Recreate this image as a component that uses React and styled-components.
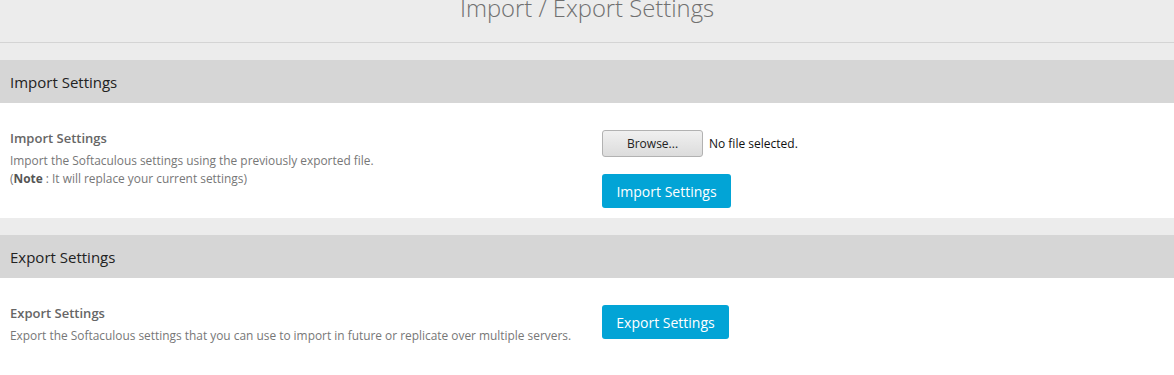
import React from "react";
import styled, { createGlobalStyle } from "styled-components";

const GlobalStyle = createGlobalStyle`
  html, body {
    margin: 0;
    padding: 0;
    background: #ececec;
    font-family: "Open Sans", "Liberation Sans", sans-serif;
  }
`;

const Page = styled.div`
  width: 1174px;
  height: 375px;
  overflow: hidden;
  background: #ececec;
`;

const TitleBar = styled.div`
  height: 42px;
  border-bottom: 1px solid #d4d4d4;
  overflow: hidden;
`;

const Title = styled.h1`
  margin: -4px 0 0;
  font-size: 23.8px;
  font-weight: 300;
  line-height: 24px;
  color: #707070;
  text-align: center;
`;

const Section = styled.section`
  margin-top: 17px;
`;

const SectionHead = styled.div`
  height: 43px;
  background: #d6d6d6;
  display: flex;
  align-items: center;
  padding: 0 10px;
  font-size: 15px;
  color: #222;
`;

const Body = styled.div`
  background: #fff;
  display: grid;
  grid-template-columns: 587px 1fr;
  padding: ${(p) => p.$pad};
`;

const Info = styled.div`
  padding: 0 10px;
`;

const Label = styled.div`
  font-size: 13px;
  font-weight: 600;
  color: #666;
  line-height: 18px;
`;

const Desc = styled.div`
  font-size: 11.9px;
  color: #777;
  line-height: 18px;
  margin-top: 4px;

  b {
    font-weight: 700;
    color: #555;
  }
`;

const Actions = styled.div`
  padding-left: 15px;
  margin-top: ${(p) => p.$top || 0}px;
  display: flex;
  flex-direction: column;
  align-items: flex-start;
  gap: 17px;
`;

const FileRow = styled.div`
  display: flex;
  align-items: center;
  gap: 6px;
  font-size: 12px;
  color: #111;
`;

const Browse = styled.button`
  width: 101px;
  height: 27px;
  border: 1px solid #b2b2b2;
  border-radius: 3px;
  background: linear-gradient(#f0f0f0, #dcdcdc);
  font-family: inherit;
  font-size: 12px;
  color: #222;
  padding: 0;
`;

const Blue = styled.button`
  width: ${(p) => p.$w}px;
  height: 34px;
  border: none;
  border-radius: 3px;
  background: #02a4d6;
  color: #fff;
  font-family: inherit;
  font-size: 14px;
  padding: 0;
`;

export default function App() {
  return (
    <Page>
      <GlobalStyle />
      <TitleBar>
        <Title>Import / Export Settings</Title>
      </TitleBar>

      <Section>
        <SectionHead>Import Settings</SectionHead>
        <Body $pad="26px 0 10px">
          <Info>
            <Label>Import Settings</Label>
            <Desc>
              Import the Softaculous settings using the previously exported file.
              <br />(<b>Note</b> : It will replace your current settings)
            </Desc>
          </Info>
          <Actions $top={1}>
            <FileRow>
              <Browse>Browse...</Browse>
              No file selected.
            </FileRow>
            <Blue $w={129}>Import Settings</Blue>
          </Actions>
        </Body>
      </Section>

      <Section>
        <SectionHead>Export Settings</SectionHead>
        <Body $pad="26px 0 40px">
          <Info>
            <Label>Export Settings</Label>
            <Desc>
              Export the Softaculous settings that you can use to import in future or replicate over multiple servers.
            </Desc>
          </Info>
          <Actions $top={1}>
            <Blue $w={127}>Export Settings</Blue>
          </Actions>
        </Body>
      </Section>
    </Page>
  );
}
